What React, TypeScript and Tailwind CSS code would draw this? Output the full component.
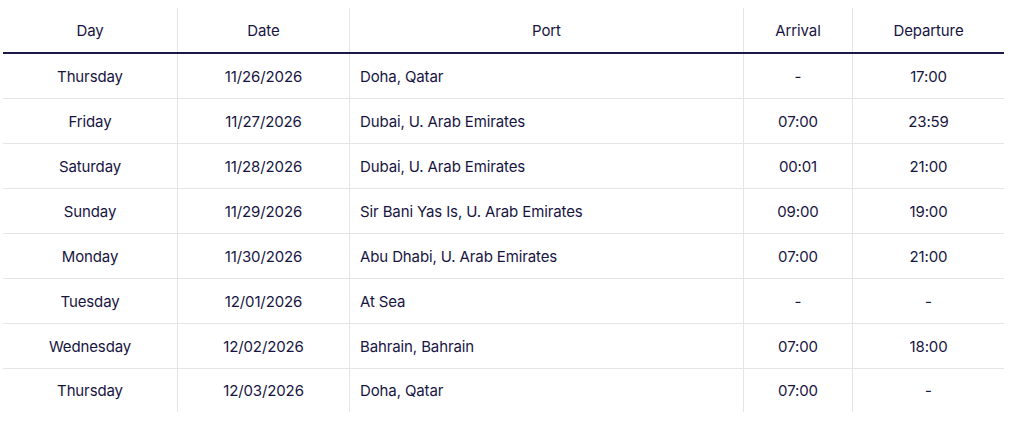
const rows = [
  ["Thursday", "11/26/2026", "Doha, Qatar", "-", "17:00"],
  ["Friday", "11/27/2026", "Dubai, U. Arab Emirates", "07:00", "23:59"],
  ["Saturday", "11/28/2026", "Dubai, U. Arab Emirates", "00:01", "21:00"],
  ["Sunday", "11/29/2026", "Sir Bani Yas Is, U. Arab Emirates", "09:00", "19:00"],
  ["Monday", "11/30/2026", "Abu Dhabi, U. Arab Emirates", "07:00", "21:00"],
  ["Tuesday", "12/01/2026", "At Sea", "-", "-"],
  ["Wednesday", "12/02/2026", "Bahrain, Bahrain", "07:00", "18:00"],
  ["Thursday", "12/03/2026", "Doha, Qatar", "07:00", "-"],
];

const cols = "grid grid-cols-[174px_172px_394px_109px_152px]";

export default function App() {
  return (
    <div className="w-[1024px] h-[425px] bg-white pt-2 pl-[3px] text-[#17153f] text-[15px] font-normal tracking-[-0.12px] [font-family:Inter,'Liberation_Sans',sans-serif]">
      <div className="w-[1001px]">
        {/* header */}
        <div className={`${cols} h-[46px] border-b-2 border-[#1b1947]`}>
          <div className="flex items-center justify-center pt-[3px]">Day</div>
          <div className="flex items-center justify-center pt-[3px] border-l border-[#e4e4e9]">Date</div>
          <div className="flex items-center justify-center pt-[3px] border-l border-[#e4e4e9]">Port</div>
          <div className="flex items-center justify-center pt-[3px] border-l border-[#e4e4e9]">Arrival</div>
          <div className="flex items-center justify-center pt-[3px] border-l border-[#e4e4e9]">Departure</div>
        </div>
        {rows.map((r, i) => {
          const last = i === rows.length - 1;
          return (
            <div
              key={i}
              className={`${cols} ${last ? "h-[43px]" : "h-[45px] border-b border-[#e4e4e9]"}`}
            >
              <div className="flex items-center justify-center pt-[2px]">{r[0]}</div>
              <div className="flex items-center justify-center pt-[2px] border-l border-[#e4e4e9]">{r[1]}</div>
              <div className="flex items-center pl-[10px] pt-[2px] border-l border-[#e4e4e9]">{r[2]}</div>
              <div className="flex items-center justify-center pt-[2px] border-l border-[#e4e4e9]">{r[3]}</div>
              <div className="flex items-center justify-center pt-[2px] border-l border-[#e4e4e9]">{r[4]}</div>
            </div>
          );
        })}
      </div>
    </div>
  );
}
